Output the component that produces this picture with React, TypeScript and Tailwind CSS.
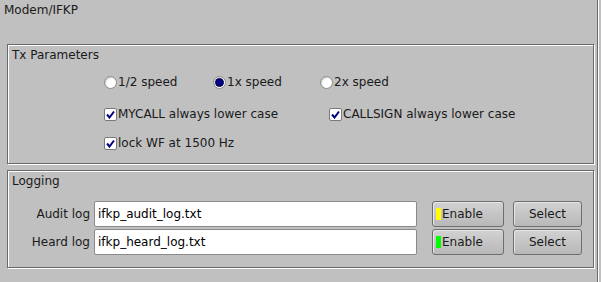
import React from "react";

const font = { fontFamily: '"DejaVu Sans", Verdana, sans-serif' };

function Radio({ checked, label }: { checked?: boolean; label: string }) {
  return (
    <div className="flex items-center gap-[1px]">
      <div className="w-[13px] h-[13px] rounded-full border border-[#8a8a8a] bg-white flex items-center justify-center shadow-[inset_1px_1px_1px_#d0d0d0]">
        {checked && <div className="w-[9px] h-[9px] rounded-full bg-[#000080] border border-[#00004a]" />}
      </div>
      <span>{label}</span>
    </div>
  );
}

function Check({ label }: { label: string }) {
  return (
    <div className="flex items-center gap-[1px]">
      <div className="w-[13px] h-[13px] rounded-[2px] border border-[#7a7a7a] bg-white flex items-center justify-center">
        <svg width="9" height="9" viewBox="0 0 9 9">
          <path d="M1 4.5 L3.5 7.5 L8 1.5" stroke="#000080" strokeWidth="2" fill="none" />
        </svg>
      </div>
      <span>{label}</span>
    </div>
  );
}

function Btn({ children }: { children: React.ReactNode }) {
  return (
    <div className="h-[26px] rounded-[3px] border border-[#6e6e6e] bg-gradient-to-b from-[#d2d2d2] to-[#b8b8b8] shadow-[inset_1px_1px_0_#e6e6e6] flex items-center">
      {children}
    </div>
  );
}

function LogRow({ label, value, light }: { label: string; value: string; light: string }) {
  return (
    <div className="flex items-center h-[26px]">
      <div className="w-[86px] text-right pr-[4px]">{label}</div>
      <div className="w-[323px] h-[26px] bg-white border border-[#8a8a8a] rounded-[2px] flex items-center pl-[3px] text-black">
        {value}
      </div>
      <div className="ml-[15px] w-[72px]">
        <Btn>
          <div className={`ml-[3px] w-[5px] h-[12px] ${light}`} />
          <span className="ml-[1px]">Enable</span>
        </Btn>
      </div>
      <div className="ml-[9px] w-[69px]">
        <Btn>
          <span className="w-full text-center">Select</span>
        </Btn>
      </div>
    </div>
  );
}

export default function App() {
  return (
    <div style={font} className="w-[601px] h-[282px] bg-[#c0c0c0] text-[12px] leading-[14px] text-[#1a1a1a] relative overflow-hidden">
      <div className="absolute top-0 bottom-0 left-[597px] w-[1px] bg-[#6a6a6a]" />
      <div className="absolute top-0 bottom-0 left-[598px] w-[1px] bg-white" />
      <div className="pl-[4px] pt-[3px] h-[44px]">Modem/IFKP</div>
      <div className="ml-[7px] w-[587px] h-[120px] border border-[#6a6a6a] shadow-[inset_1px_1px_0_#fff,1px_1px_0_#fff] pt-[3px] pl-[4px]">
        <div>Tx Parameters</div>
        <div className="flex mt-[13px] ml-[92px] h-[14px]">
          <div className="w-[109px]"><Radio label="1/2 speed" /></div>
          <div className="w-[107px]"><Radio checked label="1x speed" /></div>
          <Radio label="2x speed" />
        </div>
        <div className="flex mt-[18px] ml-[92px] h-[14px]">
          <div className="w-[225px]"><Check label="MYCALL always lower case" /></div>
          <Check label="CALLSIGN always lower case" />
        </div>
        <div className="flex mt-[15px] ml-[92px] h-[14px]">
          <Check label="lock WF at 1500 Hz" />
        </div>
      </div>
      <div className="ml-[7px] mt-[6px] w-[587px] h-[98px] border border-[#6a6a6a] shadow-[inset_1px_1px_0_#fff,1px_1px_0_#fff] pt-[3px] pl-[4px]">
        <div>Logging</div>
        <div className="-ml-[4px] mt-[13px] flex flex-col gap-[2px]">
          <LogRow label="Audit log" value="ifkp_audit_log.txt" light="bg-[#ffff00]" />
          <LogRow label="Heard log" value="ifkp_heard_log.txt" light="bg-[#00ff00]" />
        </div>
      </div>
    </div>
  );
}
